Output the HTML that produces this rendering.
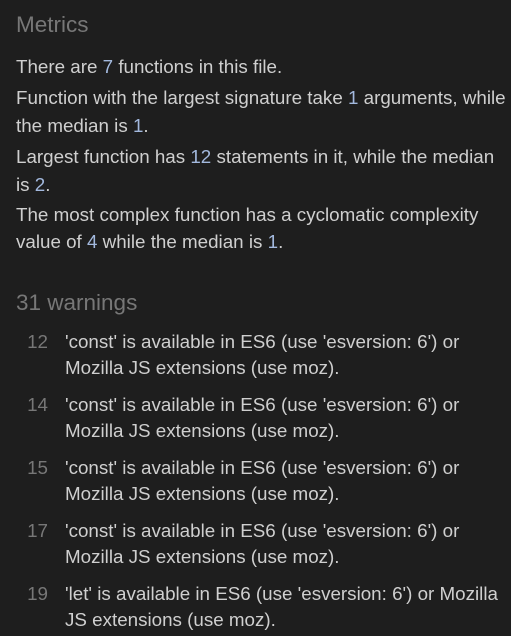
<!DOCTYPE html>
<html><head><style>
html,body{margin:0;padding:0;background:#1e1e1e;width:511px;height:636px;overflow:hidden}
body{font-family:"Liberation Sans",Arial,sans-serif;color:#cfcfcf;position:relative}
.h{position:absolute;left:16px;color:#777;font-size:22.5px;line-height:28px}
.l{position:absolute;left:16px;font-size:18.8px;line-height:28px;white-space:nowrap}
.n{color:#a3b9de}
.w{position:absolute;left:65px;font-size:18.8px;line-height:26px;white-space:nowrap}
.ln{position:absolute;left:0;width:48px;text-align:right;font-size:18.8px;line-height:26px;color:#777}
</style></head><body>
<div class="h" style="top:11px">Metrics</div>
<div class="l" style="top:53px">There are <span class="n">7</span> functions in this file.</div>
<div class="l" style="top:84px">Function with the largest signature take <span class="n">1</span> arguments, while</div>
<div class="l" style="top:112px">the median is <span class="n">1</span>.</div>
<div class="l" style="top:143px">Largest function has <span class="n">12</span> statements in it, while the median</div>
<div class="l" style="top:171px">is <span class="n">2</span>.</div>
<div class="l" style="top:201px">The most complex function has a cyclomatic complexity</div>
<div class="l" style="top:228px">value of <span class="n">4</span> while the median is <span class="n">1</span>.</div>
<div class="h" style="top:289px">31 warnings</div>

<div class="ln" style="top:329px">12</div>
<div class="w" style="top:329px">'const' is available in ES6 (use 'esversion: 6') or</div>
<div class="w" style="top:355px">Mozilla JS extensions (use moz).</div>

<div class="ln" style="top:392px">14</div>
<div class="w" style="top:392px">'const' is available in ES6 (use 'esversion: 6') or</div>
<div class="w" style="top:418px">Mozilla JS extensions (use moz).</div>

<div class="ln" style="top:455px">15</div>
<div class="w" style="top:455px">'const' is available in ES6 (use 'esversion: 6') or</div>
<div class="w" style="top:481px">Mozilla JS extensions (use moz).</div>

<div class="ln" style="top:518px">17</div>
<div class="w" style="top:518px">'const' is available in ES6 (use 'esversion: 6') or</div>
<div class="w" style="top:544px">Mozilla JS extensions (use moz).</div>

<div class="ln" style="top:581px">19</div>
<div class="w" style="top:581px">'let' is available in ES6 (use 'esversion: 6') or Mozilla</div>
<div class="w" style="top:607px">JS extensions (use moz).</div>
</body></html>
